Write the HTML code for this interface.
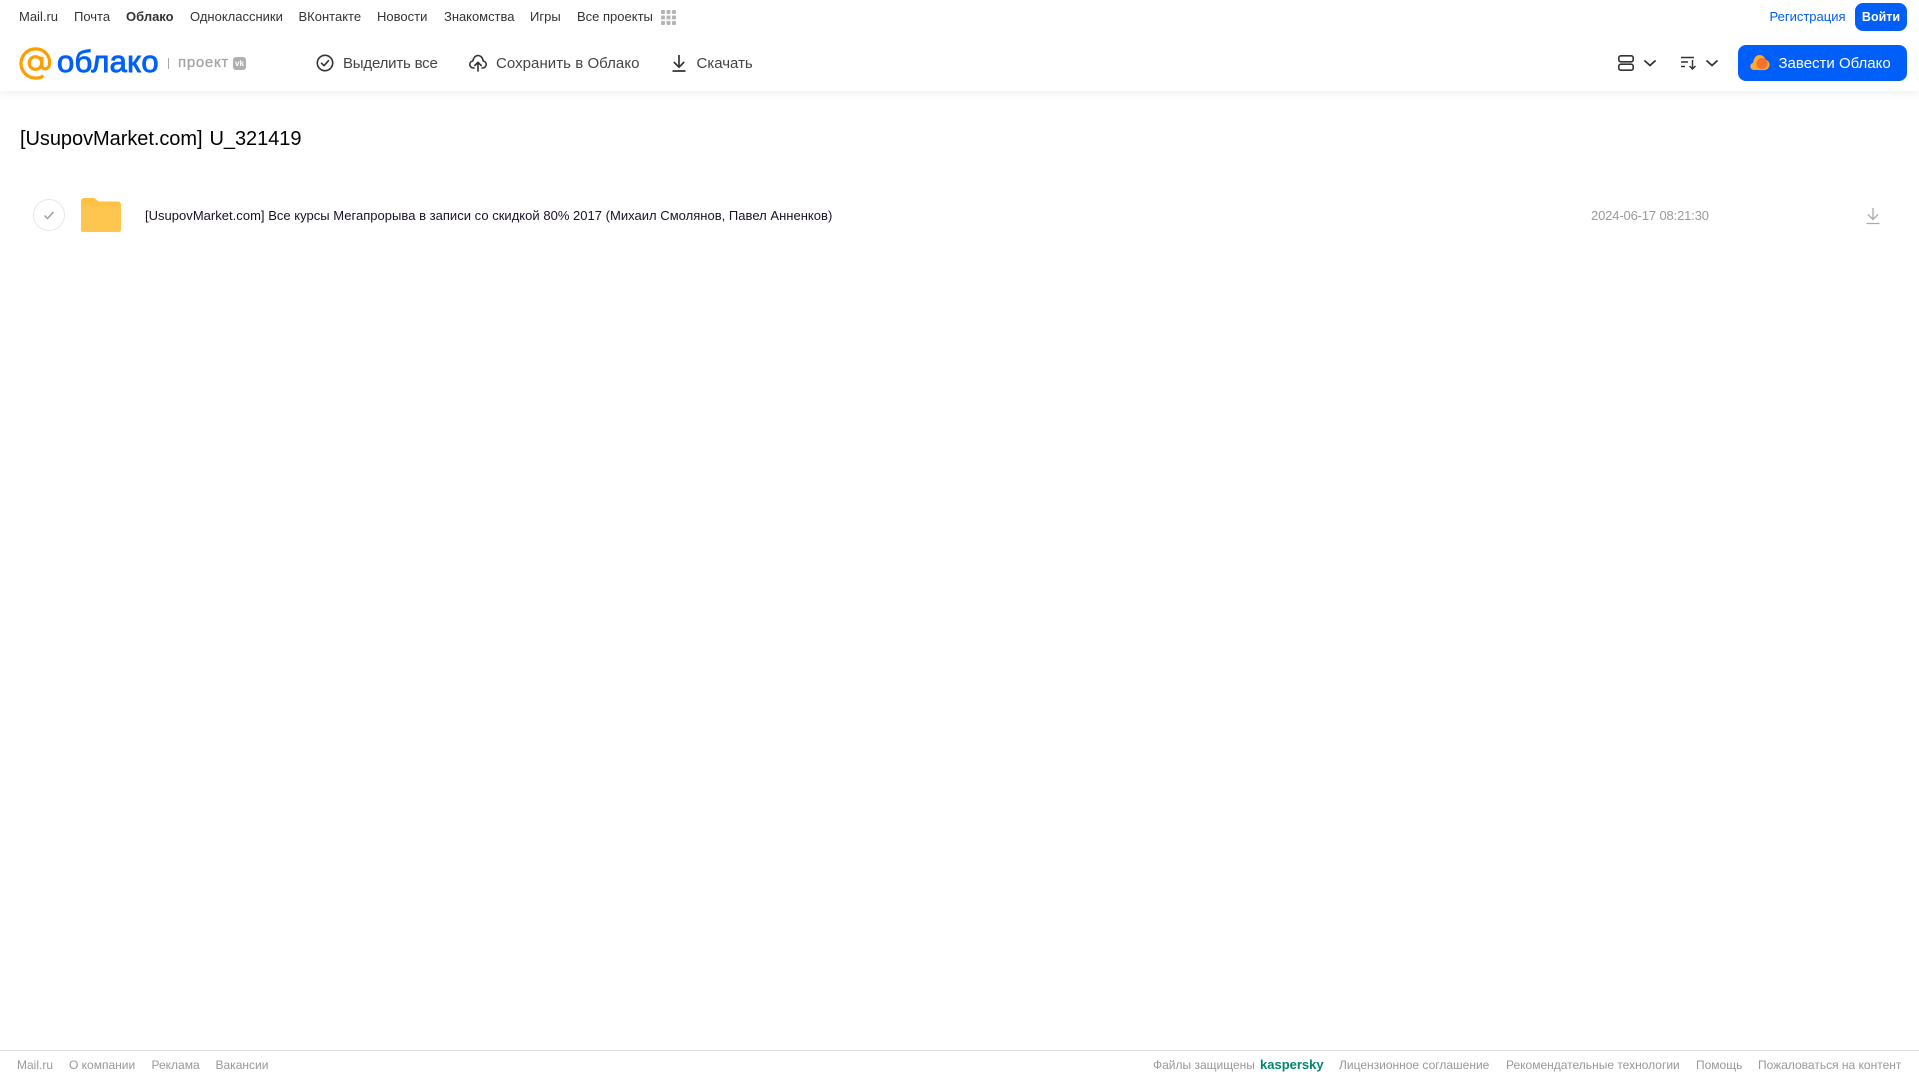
<!DOCTYPE html>
<html lang="ru"><head><meta charset="utf-8"><title>Облако</title>
<style>
html,body{margin:0;padding:0;background:#fff}
body{width:1919px;height:1079px;position:relative;overflow:hidden;font-family:"Liberation Sans",Arial,sans-serif}
.t{position:absolute;white-space:nowrap;line-height:20px}
.n{top:7px;font-size:13px;color:#333}
.b{top:54px;font-size:15px;color:#444}
.f{top:1055px;font-size:12px;color:#999}
svg{position:absolute;overflow:visible}
#hd{position:absolute;left:0;top:0;width:1919px;height:91px;background:#fff;box-shadow:0 2px 8px rgba(0,0,0,.07)}
</style></head><body>
<div id="hd"></div>
<span class="t n" style="left:19px">Mail.ru</span>
<span class="t n" style="left:74px">Почта</span>
<span class="t n" style="left:126px;font-weight:700">Облако</span>
<span class="t n" style="left:190px">Одноклассники</span>
<span class="t n" style="left:298.500px">ВКонтакте</span>
<span class="t n" style="left:377px">Новости</span>
<span class="t n" style="left:444px;letter-spacing:-.03px">Знакомства</span>
<span class="t n" style="left:530px">Игры</span>
<span class="t n" style="left:577px">Все проекты</span>
<svg style="left:661px;top:10px" width="15" height="15" fill="#b4b4b4"><rect x="0" y="0" width="4" height="4" rx="1"/><rect x="5.500" y="0" width="4" height="4" rx="1"/><rect x="11" y="0" width="4" height="4" rx="1"/><rect x="0" y="5.500" width="4" height="4" rx="1"/><rect x="5.500" y="5.500" width="4" height="4" rx="1"/><rect x="11" y="5.500" width="4" height="4" rx="1"/><rect x="0" y="11" width="4" height="4" rx="1"/><rect x="5.500" y="11" width="4" height="4" rx="1"/><rect x="11" y="11" width="4" height="4" rx="1"/></svg>
<span class="t n" style="left:1769.500px;color:#005ff9">Регистрация</span>
<div style="position:absolute;left:1855px;top:3px;width:52px;height:28px;background:#005ff9;border-radius:8px;color:#fff;font-size:12.500px;font-weight:700;line-height:28px;text-align:center">Войти</div>

<svg style="left:19px;top:47px" width="33" height="33" viewBox="0 0 33 33" fill="none" stroke="#ff9e00" stroke-width="3.200"><circle cx="16.500" cy="16" r="6.300"/><path d="M22.800 9.700v8.600c0 5 6.800 5 7.700-.8C31.500 8.500 25 1.900 16.500 1.900 8.700 1.900 2 8.300 2 16.300c0 8.200 6.500 14.800 14.500 14.800 3.200 0 5.800-.8 8-2.200"/></svg>
<span class="t" style="left:57px;top:44px;font-size:31px;line-height:36px;color:#005ff9;-webkit-text-stroke:.9px #005ff9;letter-spacing:.3px">облако</span>
<div style="position:absolute;left:168px;top:58px;width:1px;height:11px;background:#aaa"></div>
<span class="t" style="left:178px;top:53px;font-size:15px;letter-spacing:.7px;color:#a4a4a4;-webkit-text-stroke:.3px #a4a4a4">проект</span>
<div style="position:absolute;left:233px;top:57px;width:13px;height:13px;border-radius:3px;background:#b0b0b0;color:#fff;font-size:8px;font-weight:700;line-height:13px;text-align:center">vk</div>

<svg style="left:316px;top:54px" width="18" height="18" fill="none" stroke="#333" stroke-width="1.600"><circle cx="9" cy="9" r="7.700"/><path d="M5.500 9.200l2.500 2.500 4.500-5" stroke-linecap="round" stroke-linejoin="round"/></svg>
<span class="t b" style="left:343px;letter-spacing:-.2px">Выделить все</span>
<svg style="left:469px;top:54px" width="18" height="18" fill="none" stroke="#333" stroke-width="1.600" stroke-linecap="round" stroke-linejoin="round"><path d="M5 14H4.500C2.500 14 .8 12.500.8 10.500c0-1.800 1.300-3.200 3-3.500C4.300 4 6.400 1.500 9 1.500c2.700 0 4.800 2.300 5.200 5.500 1.700.3 3 1.700 3 3.500 0 2-1.700 3.500-3.700 3.500H13"/><path d="M9 17V8.500M5.800 11.500L9 8.300l3.200 3.200"/></svg>
<span class="t b" style="left:496px;letter-spacing:.05px">Сохранить в Облако</span>
<svg style="left:671px;top:54px" width="16" height="18" fill="none" stroke="#333" stroke-width="1.700"><path d="M8 1v12M2.800 8L8 13.200 13.200 8M1.500 17h13"/></svg>
<span class="t b" style="left:696.500px">Скачать</span>

<svg style="left:1618px;top:55px" width="16" height="16" fill="none" stroke="#333" stroke-width="1.600"><rect x=".8" y=".8" width="14.400" height="6" rx="2"/><rect x=".8" y="9.200" width="14.400" height="6" rx="2"/></svg>
<svg style="left:1644px;top:60px" width="12" height="7" fill="none" stroke="#333" stroke-width="1.800" stroke-linecap="round" stroke-linejoin="round"><path d="M1 1l5 4.500L11 1"/></svg>
<svg style="left:1681px;top:56px" width="16" height="14" fill="none" stroke="#333" stroke-width="1.400"><path d="M0 1.500h13M0 6h7M0 10.500h4M11.500 4v9M8.500 10l3 3 3-3"/></svg>
<svg style="left:1706px;top:60px" width="12" height="7" fill="none" stroke="#333" stroke-width="1.800" stroke-linecap="round" stroke-linejoin="round"><path d="M1 1l5 4.500L11 1"/></svg>
<div style="position:absolute;left:1738px;top:45px;width:169px;height:36px;background:#005ff9;border-radius:8px"></div>
<svg style="left:1750px;top:54px" width="20" height="17"><path d="M4 16C1.800 16 .3 14.300.3 12.300c0-1.800 1.200-3.200 2.800-3.600C3.500 4.500 6 1 9.500 1c3 0 5.300 2 6 4.800 2.300.5 4 2.500 4 5 0 2.900-2.300 5.200-5.200 5.200z" fill="#ffa930"/><circle cx="12" cy="9.500" r="5.500" fill="#f4722b"/></svg>
<span class="t" style="left:1778.500px;top:54px;font-size:15px;color:#fff">Завести Облако</span>

<span class="t" style="left:20px;top:125px;font-size:20px;line-height:28px;color:#000;word-spacing:1.500px;letter-spacing:-.05px">[UsupovMarket.com] U_321419</span>
<svg style="left:33px;top:199px" width="32" height="32" fill="none"><circle cx="16" cy="16" r="15.500" stroke="#e8e8e8"/><path d="M11.500 16.500l3 3 6-6.500" stroke="#999" stroke-width="1.400"/></svg>
<svg style="left:81px;top:198px" width="40" height="34"><path d="M0 3a3 3 0 0 1 3-3h9c3 0 4 3.500 7 3.500h18a3 3 0 0 1 3 3V31a3 3 0 0 1-3 3H3a3 3 0 0 1-3-3z" fill="#ffc043"/><rect y="8" width="40" height="26" rx="2" fill="#ffc64f"/></svg>
<span class="t" style="left:145px;top:206px;font-size:13px;color:#1a1028;letter-spacing:.02px">[UsupovMarket.com] Все курсы Мегапрорыва в записи со скидкой 80% 2017 (Михаил Смолянов, Павел Анненков)</span>
<span class="t" style="left:1591px;top:206px;font-size:13px;color:#999;letter-spacing:-.15px">2024-06-17 08:21:30</span>
<svg style="left:1866px;top:207px" width="14" height="18" fill="none" stroke="#aaa" stroke-width="1.300"><path d="M7 1v11M2 7.500L7 12.500l5-5M.5 16.500h13"/></svg>

<div style="position:absolute;left:0;top:1050px;width:1919px;height:1px;background:#dedede"></div>
<span class="t f" style="left:17px">Mail.ru</span>
<span class="t f" style="left:69px">О компании</span>
<span class="t f" style="left:151.500px">Реклама</span>
<span class="t f" style="left:215.500px">Вакансии</span>
<span class="t f" style="left:1153px">Файлы защищены</span>
<span class="t f" style="left:1260px;font-size:13px;font-weight:700;color:#00866f">kaspersky</span>
<span class="t f" style="left:1339px">Лицензионное соглашение</span>
<span class="t f" style="left:1506px">Рекомендательные технологии</span>
<span class="t f" style="left:1696px">Помощь</span>
<span class="t f" style="left:1758px">Пожаловаться на контент</span>
</body></html>
